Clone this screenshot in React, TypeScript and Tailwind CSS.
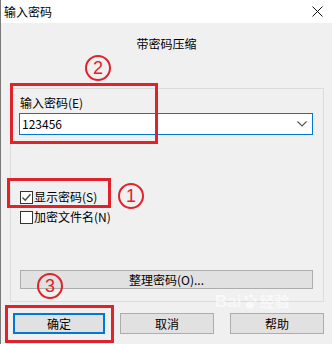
import React from 'react';

const red = 'border-[#e0222b]';

const Circled: React.FC<{ n: string; className: string }> = ({ n, className }) => (
  <div
    className={`absolute w-[26px] h-[26px] rounded-full border-2 ${red} flex items-center justify-center text-[#e0222b] text-[18px] leading-none font-['Liberation_Sans',sans-serif] ${className}`}
  >
    {n}
  </div>
);

const Checkbox: React.FC<{ checked?: boolean }> = ({ checked }) => (
  <span className="w-[13px] h-[13px] border border-[#333] bg-white flex items-center justify-center">
    {checked && (
      <svg width="11" height="11" viewBox="0 0 11 11" fill="none">
        <path d="M1.5 5.5 L4.2 8.3 L9.5 2.2" stroke="#444" strokeWidth="1.3" />
      </svg>
    )}
  </span>
);

export default function App() {
  return (
    <div className="relative w-[332px] h-[344px] overflow-hidden bg-[#f0f0f0] border-l border-[#7a7a7a] text-[12px] text-black font-['Noto_Sans_CJK_SC',sans-serif]">
      {/* title bar */}
      <div className="h-[23px] bg-white flex items-center justify-between pl-[3px] pr-[9px]">
        <span className="text-[12px] leading-[16px]">输入密码</span>
        <svg width="11" height="11" viewBox="0 0 11 11">
          <path d="M0.5 0.5 L10.5 10.5 M10.5 0.5 L0.5 10.5" stroke="#111" strokeWidth="1" />
        </svg>
      </div>

      <div className="mt-[13px] h-[16px] leading-[16px] text-center">带密码压缩</div>

      {/* group box */}
      <div className="mt-[36px] ml-[9px] w-[314px] h-[214px] border border-[#dcdcdc] pt-[6px]">
        <div className="ml-[9px] h-[16px] leading-[16px]">输入密码(E)</div>
        <div className="mt-[2px] ml-[8px] w-[294px] h-[22px] border border-[#0078d7] bg-white flex items-center justify-between pl-[2px] pr-[5px]">
          <span className="leading-[16px]">123456</span>
          <svg width="10" height="6" viewBox="0 0 10 6" fill="none">
            <path d="M0.5 0.5 L5 5 L9.5 0.5" stroke="#555" strokeWidth="1.1" />
          </svg>
        </div>

        <div className="mt-[54px] ml-[9px] h-[16px] flex items-center gap-[1px]">
          <Checkbox checked />
          <span className="leading-[16px]">显示密码(S)</span>
        </div>
        <div className="mt-[4px] ml-[9px] h-[16px] flex items-center gap-[1px]">
          <Checkbox />
          <span className="leading-[16px]">加密文件名(N)</span>
        </div>

        <div className="mt-[45px] ml-[9px] w-[293px] h-[19px] border border-[#adadad] bg-[#e1e1e1] flex items-center justify-center leading-[16px]">
          整理密码(O)...
        </div>
      </div>

      {/* dialog buttons */}
      <div className="mt-[11px] ml-[12px] flex">
        <div className="w-[92px] h-[21px] border-2 border-[#0078d7] bg-[#e1e1e1] flex items-center justify-center leading-[16px]">
          确定
        </div>
        <div className="ml-[15px] w-[94px] h-[21px] border border-[#adadad] bg-[#e1e1e1] flex items-center justify-center leading-[16px]">
          取消
        </div>
        <div className="ml-[16px] w-[94px] h-[21px] border border-[#adadad] bg-[#e1e1e1] flex items-center justify-center leading-[16px]">
          帮助
        </div>
      </div>

      {/* annotations */}
      <div className={`absolute left-[9px] top-[83px] w-[148px] h-[61px] border-[3px] ${red}`} />
      <div className={`absolute left-[6px] top-[178px] w-[104px] h-[30px] border-[3px] ${red}`} />
      <div className={`absolute left-[4px] top-[305px] w-[109px] h-[38px] border-[3px] ${red}`} />
      <Circled n="2" className="left-[84px] top-[55px]" />
      <Circled n="1" className="left-[117px] top-[183px]" />
      <Circled n="3" className="left-[36px] top-[273px]" />

      {/* watermark */}
      <div className="absolute left-[214px] top-[293px] flex items-end text-white/60 font-bold text-[17px] leading-[18px] font-['Liberation_Sans','Noto_Sans_CJK_SC',sans-serif]">
        <span>Bai</span>
        <svg width="18" height="18" viewBox="0 0 18 18" className="opacity-60">
          <circle cx="5" cy="5" r="2" fill="white" />
          <circle cx="10" cy="3" r="2" fill="white" />
          <circle cx="14" cy="7" r="2" fill="white" />
          <ellipse cx="9" cy="12" rx="4" ry="3.5" fill="white" />
        </svg>
        <span className="text-[15px]">经验</span>
      </div>
    </div>
  );
}
